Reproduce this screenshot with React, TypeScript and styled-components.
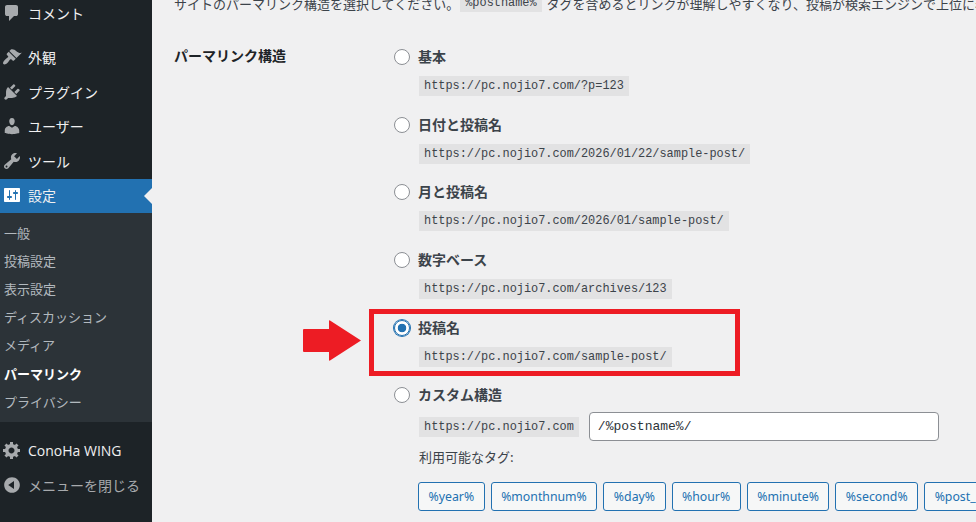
import React from "react";
import styled, { createGlobalStyle } from "styled-components";

const GlobalStyle = createGlobalStyle`
  html, body {
    margin: 0;
    padding: 0;
    overflow: hidden;
    background: #f0f0f1;
  }
`;

const JP = `"Noto Sans CJK JP", "Noto Sans", sans-serif`;
const LATIN = `"Open Sans", "Noto Sans CJK JP", sans-serif`;
const MONO = `"Liberation Mono", monospace`;

const Page = styled.div`
  display: flex;
  width: 976px;
  height: 522px;
  overflow: hidden;
  background: #f0f0f1;
  font-family: ${JP};
`;

const Sidebar = styled.nav`
  flex: 0 0 152px;
  height: 522px;
  background: #1d2327;
  overflow: hidden;
`;

const MenuList = styled.div`
  margin-top: -4px;
`;

const MenuItem = styled.div<{ $active?: boolean; $gapAfter?: boolean; $dim?: boolean }>`
  position: relative;
  box-sizing: border-box;
  display: flex;
  align-items: center;
  gap: 6px;
  height: 34.5px;
  padding: 0 0 1px 2px;
  margin-bottom: ${({ $gapAfter }) => ($gapAfter ? "10px" : "0")};
  background: ${({ $active }) => ($active ? "#2271b1" : "transparent")};
  color: ${({ $dim }) => ($dim ? "#a7aaad" : "#f0f0f1")};
  font-size: 14px;
  svg {
    flex: 0 0 20px;
    fill: ${({ $active }) => ($active ? "#fff" : "#a7aaad")};
  }
  ${({ $active }) =>
    $active &&
    `
    &::after {
      content: "";
      position: absolute;
      right: 0;
      top: 50%;
      margin-top: -8px;
      border: 8px solid transparent;
      border-right-color: #f0f0f1;
    }
  `}
`;

const SubMenu = styled.div`
  display: flex;
  flex-direction: column;
  padding: 5px 0 7px;
  margin-bottom: 11px;
  background: #2c3338;
`;

const SubItem = styled.div<{ $current?: boolean }>`
  display: flex;
  align-items: center;
  height: 28.2px;
  padding-left: 4px;
  font-size: 13px;
  font-weight: ${({ $current }) => ($current ? 700 : 400)};
  color: ${({ $current }) => ($current ? "#fff" : "rgba(240, 246, 252, 0.7)")};
`;

const LatinLabel = styled.span`
  font-family: ${LATIN};
`;

const Main = styled.main`
  flex: 1;
  min-width: 0;
  padding-left: 22px;
  overflow: hidden;
  color: #3c434a;
`;

const Intro = styled.p`
  display: flex;
  align-items: center;
  height: 22px;
  margin: -8px 0 0;
  font-size: 13px;
  white-space: nowrap;
`;

const InlineCode = styled.code`
  margin: 0 5px 0 1px;
  padding: 2px 5px;
  background: #e2e2e3;
  font-family: ${MONO};
  font-size: 11.9px;
`;

const FormRow = styled.div`
  display: grid;
  grid-template-columns: 220px 1fr;
  margin-top: 32px;
`;

const RowTitle = styled.div`
  height: 20px;
  margin-top: -1px;
  line-height: 20px;
  font-size: 14px;
  font-weight: 700;
  color: #1d2327;
`;

const Options = styled.div`
  display: flex;
  flex-direction: column;
`;

const Option = styled.div`
  position: relative;
  margin-bottom: 17.7px;
`;

const OptionLabel = styled.label`
  display: flex;
  align-items: center;
  gap: 8px;
  height: 20px;
  margin-bottom: 10px;
  font-size: 14px;
  font-weight: 700;
  color: #3c434a;
`;

const Radio = styled.input.attrs({ type: "radio" })`
  appearance: none;
  box-sizing: border-box;
  flex: 0 0 16px;
  width: 16px;
  height: 16px;
  margin: 2px 0 0;
  border: 1px solid #8c8f94;
  border-radius: 50%;
  background: #fff;
  &:checked {
    border-color: #2271b1;
    box-shadow: 0 0 0 1px #2271b1;
    background: radial-gradient(circle, #2271b1 0 4px, #fff 4.6px);
  }
`;

const Sample = styled.code`
  display: block;
  width: fit-content;
  height: 20px;
  line-height: 20px;
  margin-left: 25px;
  padding: 0 5px;
  background: #e2e2e3;
  font-family: ${MONO};
  font-size: 11.9px;
  color: #3c434a;
`;

const Highlight = styled.div`
  position: absolute;
  left: -25px;
  top: -8px;
  box-sizing: border-box;
  width: 371px;
  height: 67px;
  border: 5px solid #ed1c24;
  pointer-events: none;
`;

const Arrow = styled.svg`
  position: absolute;
  left: -91px;
  top: 3px;
  fill: #ed1c24;
`;

const CustomRow = styled.div`
  display: flex;
  align-items: center;
  gap: 10px;
  margin: -2px 0 0 25px;
`;

const CustomCode = styled(Sample)`
  margin-left: 0;
`;

const StructureInput = styled.input`
  box-sizing: border-box;
  width: 350px;
  height: 29px;
  padding: 0 8px;
  border: 1px solid #8c8f94;
  border-radius: 4px;
  background: #fff;
  font-family: ${MONO};
  font-size: 13px;
  color: #2c3338;
`;

const TagsTitle = styled.div`
  margin: 6px 0 0 25px;
  height: 20px;
  line-height: 20px;
  font-size: 13px;
  color: #3c434a;
`;

const TagList = styled.div`
  display: flex;
  gap: 6px;
  width: 600px;
  margin: 15px 0 0 24px;
`;

const TagButton = styled.button`
  flex: none;
  box-sizing: border-box;
  height: 29px;
  padding: 0 9.5px;
  border: 1px solid #2271b1;
  border-radius: 3px;
  background: #f6f7f7;
  font-family: "Noto Sans", sans-serif;
  font-size: 12.3px;
  color: #2271b1;
`;

const icons = {
  comments: "M5 2h9q.82 0 1.41.59T16 4v7q0 .82-.59 1.41T14 13h-2l-5 5v-5H5q-.82 0-1.41-.59T3 11V4q0-.82.59-1.41T5 2z",
  appearance: "M14.48 11.06L7.41 3.99l1.5-1.5c.5-.56 2.3-.47 3.51.32 1.21.8 1.43 1.28 2.91 2.1 1.18.64 2.45 1.26 4.45.85zm-.71.71L6.7 4.7 4.93 6.47c-.39.39-.39 1.02 0 1.41l1.06 1.06c.39.39.39 1.03 0 1.42-.6.6-1.43 1.11-2.21 1.69-.35.26-.7.53-1.01.84C1.43 14.23.4 16.08 1.4 17.07c.99 1 2.84-.03 4.18-1.36.31-.31.58-.66.85-1.02.57-.78 1.08-1.61 1.69-2.21.39-.39 1.02-.39 1.41 0l1.06 1.06c.39.39 1.02.39 1.41 0z",
  plugins: "M13.11 4.36L9.87 7.6 8 5.73l3.24-3.24c.35-.34 1.05-.2 1.56.32.52.51.66 1.21.31 1.55zm-8 1.77l.91-1.12 9.01 9.01-1.19.84c-.71.71-2.63 1.16-3.82 1.16H6.14L4.9 17.26c-.59.59-1.54.59-2.12 0-.59-.58-.59-1.53 0-2.12l1.24-1.24v-3.88c0-1.13.4-3.19 1.09-3.89zm7.26 3.97l3.24-3.24c.34-.35 1.04-.21 1.55.31.52.51.66 1.21.31 1.55l-3.24 3.25z",
  users: "M10 9.25c-2.27 0-2.73-3.44-2.73-3.44C7 4.02 7.82 2 9.97 2c2.16 0 2.98 2.02 2.71 3.81 0 0-.41 3.44-2.68 3.44zm0 2.57L12.72 10c2.39 0 4.52 2.33 4.52 4.53v2.49s-3.65 1.13-7.24 1.13c-3.65 0-7.24-1.13-7.24-1.13v-2.49c0-2.25 1.94-4.48 4.47-4.48z",
  tools: "M16.68 9.77c-1.34 1.34-3.3 1.67-4.95.99l-5.41 6.52c-.99.99-2.59.99-3.58 0s-.99-2.59 0-3.57l6.52-5.42c-.68-1.65-.35-3.61.99-4.95 1.28-1.28 3.12-1.62 4.72-1.06l-2.89 2.89 2.82 2.82 2.86-2.87c.53 1.58.18 3.39-1.08 4.65zM3.81 16.21c.4.39 1.04.39 1.43 0 .4-.4.4-1.04 0-1.43-.39-.4-1.03-.4-1.43 0-.39.39-.39 1.03 0 1.43z",
  settings: "M18 16V4c0-.55-.45-1-1-1H3c-.55 0-1 .45-1 1v12c0 .55.45 1 1 1h14c.55 0 1-.45 1-1zM8 11h1c.55 0 1 .45 1 1s-.45 1-1 1H8v1.5c0 .28-.22.5-.5.5s-.5-.22-.5-.5V13H6c-.55 0-1-.45-1-1s.45-1 1-1h1V5.5c0-.28.22-.5.5-.5s.5.22.5.5V11zm5-2h-1c-.55 0-1-.45-1-1s.45-1 1-1h1V5.5c0-.28.22-.5.5-.5s.5.22.5.5V7h1c.55 0 1 .45 1 1s-.45 1-1 1h-1v5.5c0 .28-.22.5-.5.5s-.5-.22-.5-.5V9z",
  generic: "M18 12h-2.18c-.17.7-.44 1.35-.81 1.93l1.54 1.54-2.1 2.1-1.54-1.54c-.58.36-1.23.63-1.91.79V19H8v-2.18c-.68-.16-1.33-.43-1.91-.79l-1.54 1.54-2.12-2.12 1.54-1.54c-.36-.58-.63-1.23-.79-1.91H1V9.03h2.17c.16-.7.44-1.35.8-1.94L2.43 5.55l2.1-2.1 1.54 1.54c.58-.37 1.24-.64 1.93-.81V2h3v2.18c.68.16 1.33.43 1.91.79l1.54-1.54 2.12 2.12-1.54 1.54c.36.59.64 1.24.8 1.94H18V12zm-8.5 1.5c1.66 0 3-1.34 3-3s-1.34-3-3-3-3 1.34-3 3 1.34 3 3 3z",
  collapse: "M10 2.16c4.33 0 7.84 3.51 7.84 7.84s-3.51 7.84-7.84 7.84S2.16 14.33 2.16 10 5.71 2.16 10 2.16zm2 11.72V6.12L6.18 9.97z",
};

const MenuIcon = ({ d }: { d: string }) => (
  <svg width="20" height="20" viewBox="0 0 20 20">
    <path d={d} />
  </svg>
);

const subItems = ["一般", "投稿設定", "表示設定", "ディスカッション", "メディア", "パーマリンク", "プライバシー"];

const options = [
  { label: "基本", url: "https://pc.nojio7.com/?p=123" },
  { label: "日付と投稿名", url: "https://pc.nojio7.com/2026/01/22/sample-post/" },
  { label: "月と投稿名", url: "https://pc.nojio7.com/2026/01/sample-post/" },
  { label: "数字ベース", url: "https://pc.nojio7.com/archives/123" },
  { label: "投稿名", url: "https://pc.nojio7.com/sample-post/", checked: true },
];

const tags = ["%year%", "%monthnum%", "%day%", "%hour%", "%minute%", "%second%", "%post_id%"];

export default function App() {
  return (
    <Page>
      <GlobalStyle />
      <Sidebar>
        <MenuList>
          <MenuItem $gapAfter>
            <MenuIcon d={icons.comments} />
            コメント
          </MenuItem>
          <MenuItem>
            <MenuIcon d={icons.appearance} />
            外観
          </MenuItem>
          <MenuItem>
            <MenuIcon d={icons.plugins} />
            プラグイン
          </MenuItem>
          <MenuItem>
            <MenuIcon d={icons.users} />
            ユーザー
          </MenuItem>
          <MenuItem>
            <MenuIcon d={icons.tools} />
            ツール
          </MenuItem>
          <MenuItem $active>
            <MenuIcon d={icons.settings} />
            設定
          </MenuItem>
          <SubMenu>
            {subItems.map((item) => (
              <SubItem key={item} $current={item === "パーマリンク"}>
                {item}
              </SubItem>
            ))}
          </SubMenu>
          <MenuItem>
            <MenuIcon d={icons.generic} />
            <LatinLabel>ConoHa WING</LatinLabel>
          </MenuItem>
          <MenuItem $dim>
            <MenuIcon d={icons.collapse} />
            メニューを閉じる
          </MenuItem>
        </MenuList>
      </Sidebar>
      <Main>
        <Intro>
          サイトのパーマリンク構造を選択してください。
          <InlineCode>%postname%</InlineCode>
          タグを含めるとリンクが理解しやすくなり、投稿が検索エンジンで上位に表示される可能性が高くなります。
        </Intro>
        <FormRow>
          <RowTitle>パーマリンク構造</RowTitle>
          <Options>
            {options.map((option) => (
              <Option key={option.label}>
                <OptionLabel>
                  <Radio name="structure" defaultChecked={option.checked} />
                  {option.label}
                </OptionLabel>
                <Sample>{option.url}</Sample>
                {option.checked && (
                  <>
                    <Highlight />
                    <Arrow width="58" height="41" viewBox="0 0 58 41">
                      <path d="M1 9h25V1q0-1 1-.5l31 20-31 20q-1 .5-1-.5v-8H1q-1 0-1-1V10q0-1 1-1z" />
                    </Arrow>
                  </>
                )}
              </Option>
            ))}
            <div>
              <OptionLabel>
                <Radio name="structure" />
                カスタム構造
              </OptionLabel>
              <CustomRow>
                <CustomCode>https://pc.nojio7.com</CustomCode>
                <StructureInput defaultValue="/%postname%/" />
              </CustomRow>
              <TagsTitle>利用可能なタグ:</TagsTitle>
              <TagList>
                {tags.map((tag) => (
                  <TagButton key={tag}>{tag}</TagButton>
                ))}
              </TagList>
            </div>
          </Options>
        </FormRow>
      </Main>
    </Page>
  );
}
